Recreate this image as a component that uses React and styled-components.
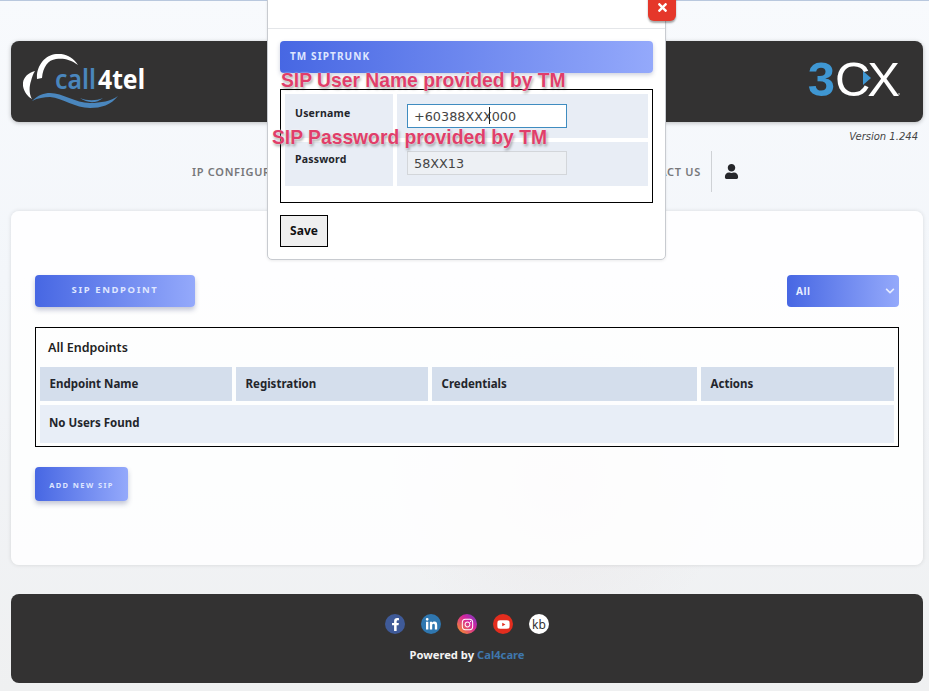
import React from 'react';
import styled, { createGlobalStyle } from 'styled-components';
import { FaFacebookF, FaLinkedinIn, FaInstagram, FaYoutube, FaUser, FaTimes, FaChevronDown } from 'react-icons/fa';

const UI_FONT = '"Noto Sans", "Open Sans", sans-serif';
const BLUE_GRADIENT = 'linear-gradient(90deg, #4767e3 0%, #94a9fb 100%)';

const Global = createGlobalStyle`
    html, body {
        margin: 0;
        padding: 0;
    }
    body {
        height: 691px;
        overflow: hidden;
        font-family: ${UI_FONT};
        background:
            radial-gradient(circle at 560px 480px, rgba(215, 190, 190, 0.16) 0, rgba(255, 255, 255, 0) 170px),
            linear-gradient(180deg, #f8fafd 0%, #f3f6fa 40%, #eff0f1 100%);
    }
`

const Page = styled.div`
    position: relative;
    height: 691px;
    box-sizing: border-box;
    padding: 41px 6px 8px 11px;
    border-top: 1px solid #b9c8de;
`

const Header = styled.header`
    display: flex;
    justify-content: space-between;
    align-items: center;
    height: 81px;
    margin-top: -1px;
    padding: 0 23px 0 12px;
    background: #333232;
    border-radius: 8px;
    box-shadow: 0 1px 4px rgba(0, 0, 0, 0.25);
`

const LogoWrap = styled.div`
    width: 130px;
    height: 56px;
`

const LogoText = styled.text`
    font-family: "Noto Sans", sans-serif;
    font-weight: ${(p) => p.$weight};
    font-size: 27px;
`

const Brand3cx = styled.div`
    position: relative;
    display: flex;
    align-items: center;
    height: 40px;
    margin-bottom: 5px;
    font-family: "Liberation Sans", sans-serif;
    font-size: 49px;
    line-height: 40px;
`

const Three = styled.span`
    color: #3f97d3;
    font-weight: 700;
`

const Cx = styled.span`
    margin-right: 3px;
    color: #fff;
    letter-spacing: -3px;
`

const PlayMark = styled.svg`
    position: absolute;
    left: 55px;
    top: 12px;
`

const Registered = styled.span`
    position: absolute;
    right: 0;
    bottom: 4px;
    width: 2px;
    height: 2px;
    border-radius: 50%;
    background: #9a9a9a;
`

const Version = styled.div`
    margin-top: 8px;
    padding-right: 5px;
    text-align: right;
    font-family: "DejaVu Sans", sans-serif;
    font-size: 10px;
    line-height: 14px;
    font-style: italic;
    color: #444;
`

const Nav = styled.nav`
    display: flex;
    align-items: center;
    height: 41px;
    margin-top: 7px;
    padding-left: 181px;
`

const NavLinks = styled.div`
    display: flex;
    justify-content: space-between;
    width: 509px;
`

const NavLink = styled.span`
    font-size: 11px;
    font-weight: 600;
    letter-spacing: 0.7px;
    color: #77777a;
`

const UserBox = styled.div`
    display: flex;
    align-items: center;
    height: 100%;
    margin-left: 10px;
    padding-left: 12px;
    border-left: 1px solid #cfd2d6;
    color: #26272b;
    font-size: 15px;
`

const Card = styled.section`
    height: 354px;
    box-sizing: border-box;
    margin-top: 19px;
    padding: 64px 24px 0;
    background: rgba(255, 255, 255, 0.85);
    border-radius: 8px;
    box-shadow: 0 0 4px rgba(0, 0, 0, 0.12);
`

const Toolbar = styled.div`
    display: flex;
    justify-content: space-between;
    align-items: flex-start;
`

const GradientButton = styled.button`
    display: flex;
    align-items: center;
    justify-content: center;
    width: ${(p) => p.$width}px;
    height: ${(p) => p.$height}px;
    padding: ${(p) => p.$drop || 0}px 0 ${(p) => p.$lift || 0}px;
    border: 0;
    border-radius: 4px;
    background: ${BLUE_GRADIENT};
    box-shadow: 0 3px 5px rgba(60, 70, 120, 0.3);
    font-family: ${UI_FONT};
    font-size: ${(p) => p.$size}px;
    font-weight: 700;
    letter-spacing: ${(p) => p.$spacing}px;
    color: #dfe6ff;
`

const SelectBox = styled.div`
    display: flex;
    justify-content: space-between;
    align-items: center;
    width: 112px;
    height: 32px;
    box-sizing: border-box;
    padding: 0 4px 0 9px;
    border-radius: 4px;
    background: ${BLUE_GRADIENT};
    font-size: 10px;
    font-weight: 700;
    letter-spacing: 0.6px;
    color: #e8edff;
`

const TableBox = styled.div`
    width: 864px;
    box-sizing: border-box;
    margin-top: 20px;
    padding: 0 4px 3px;
    border: 1px solid #000;
`

const TableTitle = styled.div`
    height: 39px;
    padding-left: 8px;
    font-size: 12.5px;
    font-weight: 600;
    line-height: 40px;
    color: #222;
`

const TableGrid = styled.div`
    display: grid;
    grid-template-columns: 192px 192px 265px 193px;
    gap: 4px;
`

const HeadCell = styled.div`
    height: 34px;
    padding-left: 9.5px;
    background: #d4deec;
    font-size: 11.5px;
    font-weight: 700;
    line-height: 34px;
    color: #23252b;
`

const EmptyCell = styled.div`
    grid-column: 1 / -1;
    height: 38px;
    padding-left: 9px;
    background: #e8eef7;
    font-size: 11.5px;
    font-weight: 700;
    line-height: 36px;
    color: #23252b;
`

const AddRow = styled.div`
    margin-top: 20px;
`

const Footer = styled.footer`
    display: flex;
    flex-direction: column;
    align-items: center;
    height: 89px;
    box-sizing: border-box;
    margin-top: 29px;
    padding-top: 20px;
    background: #333232;
    border-radius: 8px;
`

const Socials = styled.div`
    display: flex;
    gap: 16px;
`

const Social = styled.span`
    display: flex;
    align-items: center;
    justify-content: center;
    width: 20px;
    height: 20px;
    border-radius: 50%;
    background: ${(p) => p.$bg};
    color: ${(p) => p.$color || '#fff'};
    font-size: ${(p) => p.$size || 13}px;
`

const Powered = styled.div`
    margin-top: 13px;
    font-size: 11.2px;
    font-weight: 700;
    line-height: 15px;
    color: #f3f3f3;
`

const PoweredLink = styled.span`
    color: #3f77ad;
`

const Modal = styled.div`
    position: absolute;
    top: -2px;
    left: 267px;
    width: 399px;
    height: 261px;
    box-sizing: border-box;
    background: #fff;
    border: 1px solid #c8cbd0;
    border-radius: 0 0 5px 5px;
    box-shadow: 0 1px 3px rgba(0, 0, 0, 0.08);
`

const ModalTop = styled.div`
    height: 28px;
    border-bottom: 1px solid #e4e6e9;
`

const ModalBody = styled.div`
    padding: 12px 12px 0;
`

const CloseButton = styled.div`
    position: absolute;
    top: -7px;
    right: -11px;
    display: flex;
    align-items: center;
    justify-content: center;
    width: 28px;
    height: 28px;
    background: #e5372a;
    border-radius: 0 0 6px 6px;
    box-shadow: 0 2px 2px rgba(0, 0, 0, 0.35);
    color: #fff;
    font-size: 13px;
`

const PanelTitle = styled.div`
    height: 32px;
    padding-left: 10px;
    border-radius: 4px;
    background: ${BLUE_GRADIENT};
    box-shadow: 0 2px 4px rgba(60, 70, 120, 0.25);
    font-size: 10px;
    font-weight: 700;
    letter-spacing: 1.1px;
    line-height: 31px;
    color: #dfe6ff;
`

const FormBox = styled.div`
    display: grid;
    grid-template-columns: 108px 251px;
    grid-auto-rows: 44px;
    gap: 4px;
    height: 114px;
    box-sizing: border-box;
    margin-top: 16px;
    padding: 4px;
    border: 1px solid #000;
`

const FormLabel = styled.div`
    padding: ${(p) => p.$top}px 0 0 10px;
    background: #e8edf5;
    font-size: 10.5px;
    font-weight: 700;
    line-height: 15px;
    letter-spacing: 0.2px;
    color: #23252b;
`

const FormField = styled.div`
    position: relative;
    padding: ${(p) => p.$top}px 0 0 10px;
    background: #e8edf5;
`

const Input = styled.input`
    display: block;
    width: 160px;
    height: 24px;
    box-sizing: border-box;
    padding: 0 6px;
    border: 1px solid ${(p) => (p.$focused ? '#3f8cc0' : '#d3d6da')};
    background: ${(p) => (p.$focused ? '#fff' : '#edf0f4')};
    font-family: "DejaVu Sans", sans-serif;
    font-size: 12.8px;
    color: #444;
    outline: none;
`

const Caret = styled.span`
    position: absolute;
    left: 92px;
    top: 13px;
    width: 1px;
    height: 17px;
    background: #222;
`

const SaveButton = styled.button`
    display: block;
    width: 48px;
    height: 32px;
    margin-top: 12px;
    padding: 0 0 2px;
    border: 1px solid #000;
    background: #efefef;
    font-family: ${UI_FONT};
    font-size: 12px;
    font-weight: 700;
    color: #111;
`

const Note = styled.div`
    position: absolute;
    left: ${(p) => p.$left}px;
    top: ${(p) => p.$top}px;
    font-family: "Liberation Sans", sans-serif;
    font-size: 19.3px;
    font-weight: 700;
    line-height: 22px;
    white-space: nowrap;
    color: #e03e6a;
    text-shadow: 0 0 2px #fff, 1px 2px 3px rgba(0, 0, 0, 0.4);
`

const CallLogo = () => (
    <LogoWrap>
        <svg width="130" height="56" viewBox="0 0 130 56">
            <path d="M12 17 C4 19 -1 25 0 32 C1 38 5 43 9 45 C6 40 6 33 8 27 C9 23 10 20 12 17 Z" fill="#fff" />
            <path d="M14 25 C13 12 22 1 33 0 C42 -1 50 3 55 11 C47 5 40 4 33 5 C25 6 20 13 19 24 Z" fill="#fff" />
            <LogoText x="32" y="35" fill="#4a86bd" $weight={600} textLength="41" lengthAdjust="spacingAndGlyphs">call</LogoText>
            <LogoText x="75" y="35" fill="#fff" $weight={700} textLength="47" lengthAdjust="spacingAndGlyphs">4tel</LogoText>
            <path d="M9 47 C15 41 21 39 27 39 C40 39 52 49 67 49 C78 49 88 47 95 42 C88 51 78 54 67 54 C52 54 40 44 27 43 C21 43 15 44 9 47 Z" fill="#4a86bd" />
            <path d="M57 44 C64 47 73 47 80 44 C73 50 64 49 57 44 Z" fill="#4a86bd" />
        </svg>
    </LogoWrap>
)

const App = () => (
    <>
        <Global />
        <Page>
            <Header>
                <CallLogo />
                <Brand3cx>
                    <Three>3</Three>
                    <Cx>CX</Cx>
                    <PlayMark width="8" height="14" viewBox="0 0 8 14">
                        <path d="M0 0 L8 7 L0 14 Z" fill="#3f97d3" />
                    </PlayMark>
                    <Registered />
                </Brand3cx>
            </Header>
            <Version>Version 1.244</Version>
            <Nav>
                <NavLinks>
                    <NavLink>IP CONFIGURATION</NavLink>
                    <NavLink>CONTACT US</NavLink>
                </NavLinks>
                <UserBox><FaUser /></UserBox>
            </Nav>
            <Card>
                <Toolbar>
                    <GradientButton $width={160} $height={32} $size={9.5} $spacing={1.6} $lift={3}>SIP ENDPOINT</GradientButton>
                    <SelectBox>
                        All
                        <FaChevronDown size={10} />
                    </SelectBox>
                </Toolbar>
                <TableBox>
                    <TableTitle>All Endpoints</TableTitle>
                    <TableGrid>
                        <HeadCell>Endpoint Name</HeadCell>
                        <HeadCell>Registration</HeadCell>
                        <HeadCell>Credentials</HeadCell>
                        <HeadCell>Actions</HeadCell>
                        <EmptyCell>No Users Found</EmptyCell>
                    </TableGrid>
                </TableBox>
                <AddRow>
                    <GradientButton $width={93} $height={34} $size={7.5} $spacing={1.4} $drop={2}>ADD NEW SIP</GradientButton>
                </AddRow>
            </Card>
            <Footer>
                <Socials>
                    <Social $bg="#3f5a98"><FaFacebookF /></Social>
                    <Social $bg="#2f77b0"><FaLinkedinIn /></Social>
                    <Social $bg="linear-gradient(45deg, #f9a11b, #d6249f 60%, #6a3fc4)"><FaInstagram /></Social>
                    <Social $bg="#e32d1e"><FaYoutube /></Social>
                    <Social $bg="#fff" $color="#333" $size={12}>kb</Social>
                </Socials>
                <Powered>Powered by <PoweredLink>Cal4care</PoweredLink></Powered>
            </Footer>
            <Modal>
                <CloseButton><FaTimes /></CloseButton>
                <ModalTop />
                <ModalBody>
                    <PanelTitle>TM SIPTRUNK</PanelTitle>
                    <FormBox>
                        <FormLabel $top={12}>Username</FormLabel>
                        <FormField $top={10}>
                            <Input $focused readOnly value="+60388XXX000" />
                            <Caret />
                        </FormField>
                        <FormLabel $top={10}>Password</FormLabel>
                        <FormField $top={9}><Input readOnly value="58XX13" /></FormField>
                    </FormBox>
                    <SaveButton>Save</SaveButton>
                </ModalBody>
                <Note $left={13} $top={70}>SIP User Name provided by TM</Note>
                <Note $left={4} $top={127}>SIP Password provided by TM</Note>
            </Modal>
        </Page>
    </>
)

export default App;
